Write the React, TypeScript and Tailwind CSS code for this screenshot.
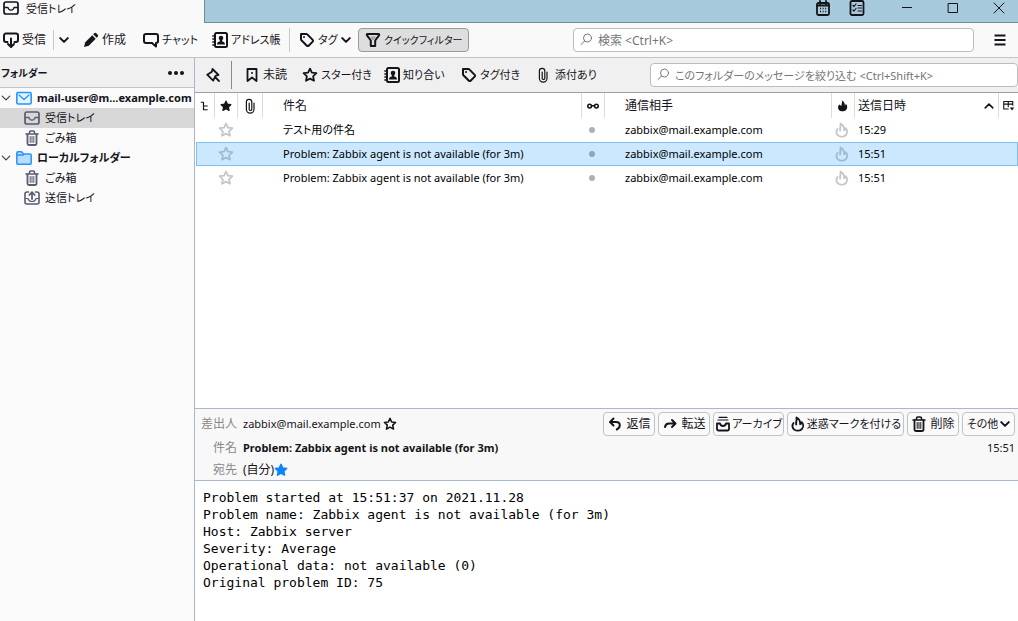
import type { ReactNode } from 'react';
import clsx from 'clsx';

type IconProps = { className?: string };

function Svg({ className = 'size-4', children }: { className?: string; children: ReactNode }) {
  return (
    <svg
      viewBox="0 0 16 16"
      className={clsx('shrink-0', className)}
      fill="none"
      stroke="currentColor"
      strokeWidth="2"
      strokeLinecap="round"
      strokeLinejoin="round"
      aria-hidden="true"
    >
      {children}
    </svg>
  );
}

const InboxIcon = ({ className }: IconProps) => (
  <Svg className={className}>
    <rect x="1" y="2" width="14" height="12" rx="2" strokeWidth="1.7" />
    <path d="M1.5 7.5H5c.3 1.8 1.4 2.6 3 2.6s2.700-.8 3-2.600h3.500" strokeWidth="1.300" />
  </Svg>
);

const OutboxIcon = ({ className }: IconProps) => (
  <Svg className={className}>
    <path d="M4.500 2H3a2 2 0 0 0-2 2v8a2 2 0 0 0 2 2h10a2 2 0 0 0 2-2V4a2 2 0 0 0-2-2h-1.500" strokeWidth="1.600" />
    <path d="M1.500 8.500H4c.4 1.800 1.800 3 4 3s3.600-1.200 4-3h2.500" strokeWidth="1.200" />
    <path d="M8 9V2.500M5.300 5 8 2.200 10.700 5" strokeWidth="1.800" />
  </Svg>
);

const GetMailIcon = () => (
  <Svg className="size-4">
    <path d="M4.500 10H3a2 2 0 0 1-2-2V3.500a2 2 0 0 1 2-2h10a2 2 0 0 1 2 2V8a2 2 0 0 1-2 2h-1.500" />
    <path d="M8 6.500v8M5 12l3 3 3-3" />
  </Svg>
);

const PencilIcon = () => (
  <Svg className="size-4">
    <path d="M1 15l1.300-4.800 6.900-6.900 3.500 3.500-6.900 6.900z" fill="currentColor" stroke="none" />
    <path d="M10.200 2.300l1-1a1.500 1.500 0 0 1 2.100 0l1.400 1.400a1.500 1.500 0 0 1 0 2.100l-1 1z" fill="currentColor" stroke="none" />
  </Svg>
);

const ChatIcon = () => (
  <Svg className="size-4">
    <path d="M3 2h10a2 2 0 0 1 2 2v5a2 2 0 0 1-2 2v3.500L9 11H3a2 2 0 0 1-2-2V4a2 2 0 0 1 2-2z" />
  </Svg>
);

const ContactIcon = () => (
  <Svg className="size-4">
    <rect x="3" y="1" width="12" height="14" rx="1.500" />
    <path d="M.8 4h1.400M.8 7h1.400M.8 10h1.400M.8 13h1.400" strokeWidth="1.400" />
    <circle cx="9" cy="6" r="2.300" fill="currentColor" stroke="none" />
    <path d="M5 12.500c0-2 1.300-2.700 2.800-3V7.500h2.400v2c1.500.3 2.800 1 2.800 3z" fill="currentColor" stroke="none" />
  </Svg>
);

const TagIcon = () => (
  <Svg className="size-4">
    <path d="M2 2h5.300a1.500 1.500 0 0 1 1 .4l5.400 5.500a1.200 1.200 0 0 1 0 1.700l-4.100 4.100a1.200 1.200 0 0 1-1.700 0L2.400 8.300a1.500 1.500 0 0 1-.4-1z" />
    <circle cx="5" cy="5" r="1" fill="currentColor" stroke="none" />
  </Svg>
);

const FunnelIcon = () => (
  <Svg className="size-4">
    <path d="M2.500 2h11c.8 0 .9.800.500 1.300L10.200 8.500V14H5.800V8.500L2 3.300C1.600 2.800 1.700 2 2.500 2z" />
    <path d="M5 4.500h6L8.500 8h-1z" fill="#a3a3a3" stroke="none" />
  </Svg>
);

const PinIcon = () => (
  <Svg className="size-4">
    <path d="M7.500 2l-.6 2.700-4.700 3 6 6 2.300-4.800L13.500 8z" strokeWidth="1.800" />
    <path d="M10.500 10.500L14 14" strokeWidth="1.800" />
  </Svg>
);

const BookmarkIcon = () => (
  <Svg className="size-4">
    <path d="M3.500 2h9v12L8 10.500 3.500 14z" strokeWidth="1.800" />
    <circle cx="8" cy="6" r="1" fill="currentColor" stroke="none" />
  </Svg>
);

const StarIcon = ({ className, filled }: IconProps & { filled?: boolean }) => (
  <Svg className={className}>
    <path
      d="M8 1.600l1.900 4.100 4.500.5-3.300 3.100.9 4.500L8 11.600l-4 2.200.9-4.500L1.600 6.200l4.500-.5z"
      fill={filled ? 'currentColor' : 'none'}
      strokeWidth="1.800"
    />
  </Svg>
);

const ClipIcon = ({ className }: IconProps) => (
  <Svg className={className}>
    <path d="M12 5v6.300a3.800 3.800 0 0 1-7.600 0V4a2.700 2.700 0 0 1 5.400 0v7.200a1.300 1.300 0 0 1-2.600 0V5" strokeWidth="1.200" />
  </Svg>
);

const FlameIcon = ({ className }: IconProps) => (
  <Svg className={className}>
    <path
      d="M3.500 7C1.800 9.200 2.200 12.200 4.500 13.700c2.300 1.400 5.700 1.200 7.500-.9 1.700-2 1.400-5-.3-6.600-.2 1-.7 1.700-1.500 2C10.300 5.300 9.200 2.800 6.500 1.500c.8 2.500-.9 4.200-.3 7"
      strokeWidth="1.900"
    />
  </Svg>
);

const FlameSolidIcon = () => (
  <Svg className="size-3">
    <path
      d="M3 6C.500 8.500 1 13 4.500 14.600c2.500 1 6 .6 7.900-1.600 2-2.500 1.500-6-.6-8-.2 1.200-.6 2-1.300 2.300C10.500 4.500 9.300 2 6.500.8c.8 2.800-.7 4.500-.5 6.700-1 .1-2-.4-3-1.500z"
      fill="currentColor"
      stroke="none"
    />
  </Svg>
);

const TrashIcon = ({ className }: IconProps) => (
  <Svg className={className}>
    <path d="M2 4h12M5.500 3.500V2.300c0-.8.500-1.300 1.300-1.300h2.400c.8 0 1.300.5 1.300 1.300v1.200" strokeWidth="1.600" />
    <path d="M3.500 4.500v9a1.500 1.500 0 0 0 1.500 1.500h6a1.500 1.500 0 0 0 1.500-1.500v-9" strokeWidth="1.800" />
    <path d="M6.200 6.500v6M8 6.500v6M9.800 6.500v6" strokeWidth="1" />
  </Svg>
);

const ReplyIcon = () => (
  <Svg className="size-4">
    <path d="M6.500 2.500L3 6l3.500 3.500M3.500 6H9c2.300 0 3.800 1.300 3.800 3.300 0 2-1.200 3.300-3 4.200" />
  </Svg>
);

const ForwardIcon = () => (
  <Svg className="size-4">
    <path d="M10 4l3.500 3.500L10 11M13 7.500H7c-2 0-3.600 1.200-4 3.500" />
  </Svg>
);

const ArchiveIcon = () => (
  <Svg className="size-4">
    <path d="M4 1.300h8M3 4h10" strokeWidth="1.200" />
    <path d="M2 7.500h3c.4 1.700 1.400 2.500 3 2.500s2.600-.8 3-2.500h3V13a1.500 1.500 0 0 1-1.500 1.500h-9A1.500 1.500 0 0 1 2 13z" strokeWidth="1.800" />
  </Svg>
);

const CalendarIcon = () => (
  <Svg className="size-4">
    <rect x="2" y="3" width="12" height="12" rx="1.500" strokeWidth="1.800" />
    <path d="M2 5.500h12M5 1v3M11 1v3" strokeWidth="1.800" />
    <path d="M5 8.500h1M7.600 8.500h1M10.200 8.500h1M5 11.500h1M7.600 11.500h1M10.200 11.500h1" strokeWidth="1.600" strokeLinecap="butt" />
  </Svg>
);

const TasksIcon = () => (
  <Svg className="size-4">
    <rect x="1.500" y="1" width="13" height="14" rx="1.500" strokeWidth="1.800" />
    <path d="M9 5.500h3.500M9 8h3.500M9 11h3.500M4 5.500l1 1L7 4M4 10l1 1 2-2.500" strokeWidth="1.200" />
  </Svg>
);

const MailIcon = () => (
  <Svg className="size-4 text-[#2196fc]">
    <rect x=".8" y="2.500" width="14.400" height="11.500" rx="1.500" fill="#e5f2ff" strokeWidth="1.600" />
    <path d="M3 5l5 4.500L13 5" strokeWidth="1.300" />
  </Svg>
);

const FolderIcon = () => (
  <Svg className="size-4 text-[#2196fc]">
    <path d="M.8 4V3a1.200 1.200 0 0 1 1.200-1.200h3.500L7.500 4H14a1.200 1.200 0 0 1 1.200 1.200V13a1.200 1.200 0 0 1-1.200 1.200H2A1.200 1.200 0 0 1 .8 13z" fill="#b9dcff" strokeWidth="1.500" />
    <path d="M1 5h6.500" strokeWidth="1.300" />
  </Svg>
);

const SearchIcon = () => (
  <Svg className="size-4 text-[#777]">
    <circle cx="9.500" cy="6" r="4" strokeWidth="1" />
    <path d="M6.700 9L3 12.500" strokeWidth="1" />
  </Svg>
);

const ChevronDown = ({ thin }: { thin?: boolean }) => (
  <Svg className="size-2.5">
    <path d="M2 5l6 6 6-6" strokeWidth={thin ? 2 : 3.200} />
  </Svg>
);

function ToolButton({ className, icon, label }: { className?: string; icon: ReactNode; label: string }) {
  return (
    <button type="button" className={clsx('flex h-6 items-center whitespace-nowrap', className)}>
      {icon}
      {label}
    </button>
  );
}

function SearchBox({ className, label, placeholder }: { className?: string; label: string; placeholder: string }) {
  return (
    <label className={clsx('flex h-6 items-center gap-1 rounded-sm border border-[#bdbdbd] bg-white px-1', className)}>
      <SearchIcon />
      <input
        type="text"
        aria-label={label}
        placeholder={placeholder}
        className="h-5 min-w-0 flex-1 outline-none placeholder:text-[#757575]"
      />
    </label>
  );
}

function TreeItem({ icon, label, selected }: { icon: ReactNode; label: string; selected?: boolean }) {
  return (
    <li>
      <button
        type="button"
        className={clsx('flex h-5 w-full items-center gap-[5px] pl-6 text-[#15141a]', selected && 'bg-[#d7d7d7]')}
      >
        <span className="text-[#5b5b73]">{icon}</span>
        {label}
      </button>
    </li>
  );
}

function TreeRoot({ icon, label, children }: { icon: ReactNode; label: string; children: ReactNode }) {
  return (
    <li>
      <button type="button" className="flex h-5 w-full items-center gap-[5px] whitespace-nowrap pl-px font-bold">
        <span className="text-[#444]"><ChevronDown thin /></span>
        {icon}
        {label}
      </button>
      <ul>{children}</ul>
    </li>
  );
}

const messages = [
  { subject: 'テスト用の件名', from: 'zabbix@mail.example.com', time: '15:29', selected: false },
  { subject: 'Problem: Zabbix agent is not available (for 3m)', from: 'zabbix@mail.example.com', time: '15:51', selected: true },
  { subject: 'Problem: Zabbix agent is not available (for 3m)', from: 'zabbix@mail.example.com', time: '15:51', selected: false },
];

const body = `Problem started at 15:51:37 on 2021.11.28
Problem name: Zabbix agent is not available (for 3m)
Host: Zabbix server
Severity: Average
Operational data: not available (0)
Original problem ID: 75`;

const mailAction = 'justify-center rounded-sm border border-[#c2c2c2] bg-[#fafafa]';
const columnHead = 'border-r border-[#dcdcdc] font-normal';

function TitleBar() {
  return (
    <header className="flex h-[23px]">
      <div className="flex w-[204px] items-start gap-[7px] bg-[#f9f9f9] pl-[3px]">
        <InboxIcon className="size-4" />
        <span className="text-[11px] leading-[18px]">受信トレイ</span>
      </div>
      <div className="flex flex-1 items-start justify-end border-b border-l border-[#6d8c9d] bg-[#a6cadb]">
        <button type="button" aria-label="カレンダー"><CalendarIcon /></button>
        <button type="button" aria-label="ToDo" className="ml-[18px]"><TasksIcon /></button>
        <div className="ml-[34px] flex w-[119px] items-start justify-between pr-[11px]">
          <button type="button" aria-label="最小化">
            <Svg className="size-4"><path d="M3 7.500h10" strokeWidth="1" strokeLinecap="butt" /></Svg>
          </button>
          <button type="button" aria-label="最大化">
            <Svg className="size-4"><path d="M3.500 3.500h9v9h-9z" strokeWidth="1" /></Svg>
          </button>
          <button type="button" aria-label="閉じる">
            <Svg className="size-4"><path d="M3 3l10 10M13 3L3 13" strokeWidth="1" /></Svg>
          </button>
        </div>
      </div>
    </header>
  );
}

function Toolbar() {
  return (
    <nav className="flex h-[35px] items-center border-b border-[#c4c4c4] bg-[#f9f9f9] pl-[3px]">
      <ToolButton className="w-[50px] gap-[3px]" icon={<GetMailIcon />} label="受信" />
      <button type="button" aria-label="受信メニュー" className="flex h-5 w-[30px] items-center border-l border-[#c8c8c8] pl-[5px]">
        <ChevronDown />
      </button>
      <ToolButton className="w-[60px] gap-[3px]" icon={<PencilIcon />} label="作成" />
      <ToolButton className="w-[69px] gap-[3px] text-[11px]" icon={<ChatIcon />} label="チャット" />
      <ToolButton className="w-[77px] gap-[3px] text-[11px]" icon={<ContactIcon />} label="アドレス帳" />
      <button type="button" className="flex h-6 w-[69px] items-center gap-[3px] whitespace-nowrap border-l border-[#c8c8c8] pl-[9px] text-[11px]">
        <TagIcon />
        タグ
        <ChevronDown />
      </button>
      <button
        type="button"
        aria-pressed="true"
        className="flex h-6 w-[111px] items-center gap-[3px] whitespace-nowrap rounded-sm border border-[#999] bg-[#dedede] pl-1.5 text-[10px]"
      >
        <FunnelIcon />
        クイックフィルター
      </button>
      <SearchBox className="ml-auto w-[401px]" label="検索" placeholder="検索 <Ctrl+K>" />
      <button type="button" aria-label="メニュー" className="ml-[18px] mr-2.5">
        <Svg className="size-4"><path d="M2.500 3.500h11M2.500 8h11M2.500 12.500h11" strokeLinecap="butt" /></Svg>
      </button>
    </nav>
  );
}

function FolderPane() {
  return (
    <aside className="w-[195px] shrink-0 border-r border-[#a9b7c9] bg-[#fafafa] text-[11px]">
      <div className="flex h-[30px] items-center justify-between border-b border-[#c4c4c4] bg-[#f0f0f0] pl-px pr-2.5">
        <h2 className="text-[10px] font-bold">フォルダー</h2>
        <button type="button" aria-label="フォルダーのメニュー">
          <Svg className="size-4">
            <g fill="currentColor" stroke="none">
              <circle cx="2" cy="8" r="2" />
              <circle cx="8" cy="8" r="2" />
              <circle cx="14" cy="8" r="2" />
            </g>
          </Svg>
        </button>
      </div>
      <ul>
        <TreeRoot icon={<MailIcon />} label="mail-user@m...example.com">
          <TreeItem icon={<InboxIcon className="size-4" />} label="受信トレイ" selected />
          <TreeItem icon={<TrashIcon className="size-4" />} label="ごみ箱" />
        </TreeRoot>
        <TreeRoot icon={<FolderIcon />} label="ローカルフォルダー">
          <TreeItem icon={<TrashIcon className="size-4" />} label="ごみ箱" />
          <TreeItem icon={<OutboxIcon className="size-4" />} label="送信トレイ" />
        </TreeRoot>
      </ul>
    </aside>
  );
}

function QuickFilterBar() {
  return (
    <div className="flex h-[35px] items-center border-b border-[#a0a0a0] bg-[#f0f0f0] text-[11px]">
      <button type="button" aria-label="固定" className="flex h-7 w-[37px] items-center border-r border-[#8a8a8a] pl-2.5">
        <PinIcon />
      </button>
      <ToolButton className="ml-3 w-[58px] gap-[3px] text-[12px]" icon={<BookmarkIcon />} label="未読" />
      <ToolButton className="w-[82px] gap-[3px]" icon={<StarIcon className="size-4" />} label="スター付き" />
      <ToolButton className="w-[77px] gap-[3px]" icon={<ContactIcon />} label="知り合い" />
      <ToolButton className="w-[74px] gap-[3px]" icon={<TagIcon />} label="タグ付き" />
      <ToolButton className="w-[66px] gap-1" icon={<ClipIcon className="size-4" />} label="添付あり" />
      <SearchBox
        className="ml-auto w-[368px]"
        label="絞り込み"
        placeholder="このフォルダーのメッセージを絞り込む <Ctrl+Shift+K>"
      />
    </div>
  );
}

function MessageList() {
  return (
    <div className="flex-1 bg-white pl-px">
      <table className="w-full table-fixed border-separate border-spacing-0 text-left">
        <colgroup>
          <col className="w-[19px]" />
          <col className="w-[23px]" />
          <col className="w-[25px]" />
          <col />
          <col className="w-[23px]" />
          <col className="w-[227px]" />
          <col className="w-[23px]" />
          <col className="w-[144px]" />
          <col className="w-[19px]" />
        </colgroup>
        <thead>
          <tr className="h-[25px]">
            <th className={columnHead} aria-label="スレッド">
              <Svg className="mx-auto size-3"><path d="M3 3h3v10h5M6 8h5" strokeWidth="1.600" /></Svg>
            </th>
            <th className={columnHead} aria-label="スター"><StarIcon className="mx-auto size-3" filled /></th>
            <th className={columnHead} aria-label="添付"><ClipIcon className="mx-auto size-4" /></th>
            <th className={clsx(columnHead, 'pl-5')}>件名</th>
            <th className={columnHead} aria-label="既読">
              <Svg className="mx-auto size-3">
                <circle cx="3.500" cy="8" r="2.500" />
                <circle cx="12.500" cy="8" r="2.500" />
                <path d="M6 7.500h4" />
              </Svg>
            </th>
            <th className={clsx(columnHead, 'pl-5')}>通信相手</th>
            <th className={columnHead} aria-label="迷惑メール"><span className="flex justify-center"><FlameSolidIcon /></span></th>
            <th className={columnHead}>
              <span className="flex items-center justify-between pl-[3px] pr-1">
                送信日時
                <Svg className="size-2.5"><path d="M2 11l6-6 6 6" strokeWidth="2.600" /></Svg>
              </span>
            </th>
            <th aria-label="表示する列">
              <Svg className="mx-auto size-3">
                <path d="M1 2h12v5M1 2v10h6M1 5.500h12M7 2v7" strokeWidth="1.500" />
                <path d="M9 10h6l-3 4z" fill="currentColor" stroke="none" />
              </Svg>
            </th>
          </tr>
        </thead>
        <tbody className="text-[11px] text-black">
          {messages.map((m, i) => (
            <tr key={i} className={clsx('h-6', m.selected && 'bg-[#cce8ff] outline outline-1 -outline-offset-1 outline-[#7fc0f5]')}>
              <td />
              <td className={clsx('pr-px', m.selected ? 'text-[#9dbbd6]' : 'text-[#c6c6c6]')}><StarIcon className="mx-auto size-4" /></td>
              <td />
              <td className="truncate pl-5">{m.subject}</td>
              <td className="pr-1">
                <span className={clsx('mx-auto block size-1.5 rounded-full', m.selected ? 'bg-[#8ea6bd]' : 'bg-[#b0b0b0]')} />
              </td>
              <td className="truncate pl-5">{m.from}</td>
              <td className={clsx('pr-1', m.selected ? 'text-[#9dbbd6]' : 'text-[#c6c6c6]')}><FlameIcon className="mx-auto size-4" /></td>
              <td className="pl-[3px]">{m.time}</td>
              <td />
            </tr>
          ))}
        </tbody>
      </table>
    </div>
  );
}

function MessagePane() {
  return (
    <article className="border-t border-[#a9b7c9] bg-white">
      <header className="border-b border-[#a9b7c9] bg-[#f8f8f8] pr-[3px] pt-[3px] text-[11px]">
        <div className="flex h-6 items-center">
          <span className="w-[42px] shrink-0 text-right text-[12px] text-[#888]">差出人</span>
          <span className="ml-1.5">zabbix@mail.example.com</span>
          <StarIcon className="ml-0.5 size-3.5" />
          <div className="ml-auto flex gap-[3px]">
            <ToolButton className={clsx(mailAction, 'w-[52px] gap-[3px] text-[12px]')} icon={<ReplyIcon />} label="返信" />
            <ToolButton className={clsx(mailAction, 'w-[52px] gap-[3px] text-[12px]')} icon={<ForwardIcon />} label="転送" />
            <ToolButton className={clsx(mailAction, 'w-[71px] gap-px')} icon={<ArchiveIcon />} label="アーカイブ" />
            <ToolButton className={clsx(mailAction, 'w-[117px] gap-px')} icon={<FlameIcon className="size-4" />} label="迷惑マークを付ける" />
            <ToolButton className={clsx(mailAction, 'w-[52px] gap-[3px] text-[12px]')} icon={<TrashIcon className="size-4" />} label="削除" />
            <button type="button" className={clsx(mailAction, 'flex h-6 w-[53px] items-center gap-0.5 whitespace-nowrap')}>
              その他
              <ChevronDown />
            </button>
          </div>
        </div>
        <div className="flex h-6 items-center">
          <span className="w-[42px] shrink-0 text-right text-[12px] text-[#888]">件名</span>
          <h1 className="ml-1.5 font-bold">Problem: Zabbix agent is not available (for 3m)</h1>
          <time className="ml-auto">15:51</time>
        </div>
        <div className="flex h-5 items-center">
          <span className="w-[42px] shrink-0 text-right text-[12px] text-[#888]">宛先</span>
          <span className="ml-1.5 text-[12px]">(自分)</span>
          <StarIcon className="size-3.5 text-[#0a84ff]" filled />
        </div>
      </header>
      <pre className="px-2 pb-[30px] pt-2 font-['DejaVu_Sans_Mono',monospace] text-[13px] leading-[17px] text-black">
        {body}
      </pre>
    </article>
  );
}

export default function App() {
  return (
    <div className="flex min-h-screen flex-col bg-white font-['Noto_Sans','Noto_Sans_CJK_JP',sans-serif] text-[12px] leading-4 text-[#15141a] [font-feature-settings:'palt']">
      <TitleBar />
      <Toolbar />
      <div className="flex flex-1">
        <FolderPane />
        <main className="flex min-w-0 flex-1 flex-col">
          <QuickFilterBar />
          <MessageList />
          <MessagePane />
        </main>
      </div>
    </div>
  );
}
